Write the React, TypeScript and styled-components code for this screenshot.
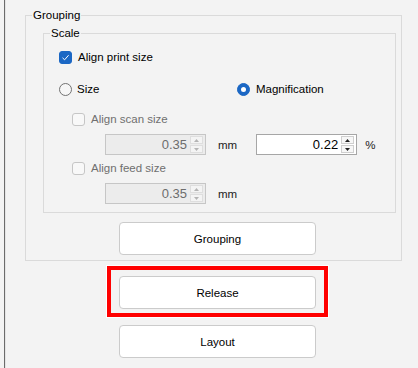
import React from "react";
import styled, { createGlobalStyle } from "styled-components";

const GlobalStyle = createGlobalStyle`
  html, body {
    margin: 0;
    padding: 0;
    background: #f3f3f3;
  }
  body {
    font-family: "Liberation Sans", Arial, sans-serif;
    font-size: 11.5px;
    color: #000;
  }
`;

const Window = styled.div`
  height: 368px;
  padding-left: 4px;
  box-sizing: border-box;
  overflow: hidden;
  background: #f3f3f3;
`;

const Panel = styled.div`
  height: 100%;
  box-sizing: border-box;
  border-left: 1px solid #6b6b6b;
  box-shadow: inset 1px 0 #e4e4e4;
  padding: 8px 16px 0 20px;
  display: flex;
  flex-direction: column;
  align-items: flex-start;
`;

const Group = styled.fieldset`
  margin: 0;
  padding: 0;
  min-width: 0;
  align-self: stretch;
  border: 1px solid #dadada;
`;

const Legend = styled.legend`
  margin-left: 6px;
  padding: 0 1px;
  line-height: 14px;
`;

const GroupBody = styled.div`
  padding: 4px 5px 5px 17px;
`;

const ScaleBody = styled.div`
  padding: 7px 0 8px 15px;
  display: flex;
  flex-direction: column;
`;

const Row = styled.div<{ $top?: number; $indent?: number }>`
  display: flex;
  align-items: center;
  min-height: 20px;
  margin-top: ${(p) => p.$top ?? 0}px;
  padding-left: ${(p) => p.$indent ?? 0}px;
`;

const RadioRow = styled.div`
  display: grid;
  grid-template-columns: 178px auto;
  align-items: center;
  height: 20px;
  margin-top: 12px;
`;

const Option = styled.label<{ $gap: number }>`
  display: flex;
  align-items: center;
  gap: ${(p) => p.$gap}px;
`;

const Label = styled.span<{ $disabled?: boolean }>`
  color: ${(p) => (p.$disabled ? "#6f6f6f" : "#000")};
  line-height: 14px;
`;

const Box = styled.span<{ $checked?: boolean; $disabled?: boolean }>`
  width: 13px;
  height: 13px;
  box-sizing: border-box;
  border-radius: 3px;
  display: inline-flex;
  align-items: center;
  justify-content: center;
  flex-shrink: 0;
  background: ${(p) => (p.$checked ? "#1b67c4" : "#f8f8f8")};
  border: 1px solid
    ${(p) => (p.$checked ? "#1b67c4" : p.$disabled ? "#c6c6c6" : "#8a8a8a")};
`;

const Round = styled.span<{ $checked?: boolean }>`
  width: 13px;
  height: 13px;
  box-sizing: border-box;
  border-radius: 50%;
  flex-shrink: 0;
  display: inline-flex;
  align-items: center;
  justify-content: center;
  background: ${(p) => (p.$checked ? "#1b67c4" : "#f6f6f6")};
  border: 1px solid ${(p) => (p.$checked ? "#1b67c4" : "#727272")};
`;

const Dot = styled.span`
  width: 5px;
  height: 5px;
  border-radius: 50%;
  background: #fff;
`;

const SpinBox = styled.div<{ $disabled?: boolean }>`
  display: flex;
  width: 101px;
  height: 21px;
  box-sizing: border-box;
  border: 1px solid ${(p) => (p.$disabled ? "#c6c6c6" : "#a6a6a6")};
  background: ${(p) => (p.$disabled ? "#ececec" : "#fff")};
`;

const SpinValue = styled.span<{ $disabled?: boolean }>`
  flex: 1;
  text-align: right;
  padding-right: 3px;
  font-size: 13px;
  line-height: 19px;
  color: ${(p) => (p.$disabled ? "#6d6d6d" : "#000")};
`;

const SpinButtons = styled.div`
  width: 13px;
  padding: 1px 2px 1px 0;
  display: flex;
  flex-direction: column;
  gap: 1px;
`;

const SpinButton = styled.span<{ $disabled?: boolean }>`
  flex: 1;
  display: flex;
  align-items: center;
  justify-content: center;
  box-sizing: border-box;
  border: 1px solid ${(p) => (p.$disabled ? "#dedede" : "#cfcfcf")};
  background: ${(p) => (p.$disabled ? "#f4f4f4" : "#f7f7f7")};
  color: ${(p) => (p.$disabled ? "#b4b4b4" : "#222")};
`;

const Unit = styled.span<{ $left: number }>`
  margin-left: ${(p) => p.$left}px;
  color: #222;
`;

const ButtonSlot = styled.div`
  margin-top: 9px;
  padding-left: 76px;
`;

const Button = styled.button`
  width: 197px;
  height: 33px;
  box-sizing: border-box;
  border: 1px solid #cbcbcb;
  border-radius: 4px;
  background: #fff;
  font-family: inherit;
  font-size: 11.5px;
  color: #000;
  padding: 0;
`;

const Highlight = styled.div`
  margin: 5px 0 0 82px;
  border: 4px solid #ff0000;
  box-shadow: 0 0 0 1px #fff;
  padding: 6px 8px 4px;
  display: flex;
`;

const LayoutSlot = styled.div`
  margin: 8px 0 0 94px;
`;

const CheckMark = () => (
  <svg width="9" height="9" viewBox="0 0 9 9">
    <path d="M1.5 4.8 L3.6 6.8 L7.6 2.2" fill="none" stroke="#fff" strokeWidth="1" />
  </svg>
);

const Arrow = ({ up }: { up?: boolean }) => (
  <svg width="5" height="3" viewBox="0 0 5 3">
    <path d={up ? "M0 3 L2.5 0 L5 3 Z" : "M0 0 L2.5 3 L5 0 Z"} fill="currentColor" />
  </svg>
);

const Spin = ({ value, disabled }: { value: string; disabled?: boolean }) => (
  <SpinBox $disabled={disabled}>
    <SpinValue $disabled={disabled}>{value}</SpinValue>
    <SpinButtons>
      <SpinButton $disabled={disabled}>
        <Arrow up />
      </SpinButton>
      <SpinButton $disabled={disabled}>
        <Arrow />
      </SpinButton>
    </SpinButtons>
  </SpinBox>
);

const App = () => (
  <Window>
    <GlobalStyle />
    <Panel>
      <Group>
        <Legend>Grouping</Legend>
        <GroupBody>
          <Group>
            <Legend>Scale</Legend>
            <ScaleBody>
              <Row>
                <Option $gap={6}>
                  <Box $checked>
                    <CheckMark />
                  </Box>
                  <Label>Align print size</Label>
                </Option>
              </Row>
              <RadioRow>
                <Option $gap={5}>
                  <Round />
                  <Label>Size</Label>
                </Option>
                <Option $gap={6}>
                  <Round $checked>
                    <Dot />
                  </Round>
                  <Label>Magnification</Label>
                </Option>
              </RadioRow>
              <Row $top={10} $indent={13}>
                <Option $gap={6}>
                  <Box $disabled />
                  <Label $disabled>Align scan size</Label>
                </Option>
              </Row>
              <Row $top={5} $indent={46}>
                <Spin value="0.35" disabled />
                <Unit $left={12}>mm</Unit>
                <Unit $left={19}>
                  <Spin value="0.22" />
                </Unit>
                <Unit $left={8}>%</Unit>
              </Row>
              <Row $top={3} $indent={13}>
                <Option $gap={6}>
                  <Box $disabled />
                  <Label $disabled>Align feed size</Label>
                </Option>
              </Row>
              <Row $top={5} $indent={46}>
                <Spin value="0.35" disabled />
                <Unit $left={12}>mm</Unit>
              </Row>
            </ScaleBody>
          </Group>
          <ButtonSlot>
            <Button>Grouping</Button>
          </ButtonSlot>
        </GroupBody>
      </Group>
      <Highlight>
        <Button>Release</Button>
      </Highlight>
      <LayoutSlot>
        <Button>Layout</Button>
      </LayoutSlot>
    </Panel>
  </Window>
);

export default App;
